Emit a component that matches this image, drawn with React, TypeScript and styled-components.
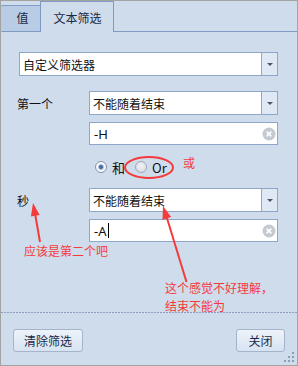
import styled, { createGlobalStyle } from 'styled-components';

const GlobalStyle = createGlobalStyle`
  html, body {
    margin: 0;
    padding: 0;
    background: #ffffff;
  }
  body {
    font-family: "Noto Sans CJK SC", "Noto Sans", sans-serif;
    font-size: 12px;
  }
`;

const BORDER = '#8ea6c8';
const RED = '#f43b3b';

const Window = styled.div`
  position: relative;
  width: 298px;
  height: 366px;
  box-sizing: border-box;
  border: 1px solid #a3a3a3;
  background: #cfdcec;
  display: flex;
  flex-direction: column;
  overflow: hidden;
`;

const TabStrip = styled.div`
  height: 31px;
  box-sizing: border-box;
  border-bottom: 1px solid #7f9bc4;
  display: flex;
  align-items: flex-end;
`;

const Tab = styled.div<{ $active?: boolean }>`
  position: relative;
  box-sizing: border-box;
  height: ${(p) => (p.$active ? '31px' : '27px')};
  margin-bottom: -1px;
  margin-left: ${(p) => (p.$active ? '-1px' : '0')};
  width: ${(p) => (p.$active ? '74px' : '40px')};
  border: 1px solid #7f9bc4;
  border-bottom: ${(p) => (p.$active ? 'none' : '1px solid #7f9bc4')};
  border-left-color: ${(p) => (p.$active ? '#7f9bc4' : 'transparent')};
  background: ${(p) => (p.$active ? '#cfdcec' : '#b9cce5')};
  z-index: ${(p) => (p.$active ? 2 : 1)};
  display: flex;
  justify-content: center;
  padding-top: ${(p) => (p.$active ? '8px' : '4px')};
  padding-left: ${(p) => (p.$active ? '1px' : '3px')};
  color: #1b2a47;
  font-size: 12px;
  line-height: 16px;
`;

const Body = styled.div`
  flex: 1;
  padding: 20px 19px 0 18px;
  display: flex;
  flex-direction: column;
`;

const Combo = styled.div`
  height: 24px;
  box-sizing: border-box;
  border: 1px solid ${BORDER};
  background: #ffffff;
  display: flex;
  align-items: stretch;
`;

const FieldText = styled.div`
  flex: 1;
  display: flex;
  align-items: center;
  padding-left: 3px;
  color: #111111;
  font-size: 12px;
`;

const DropButton = styled.div`
  width: 15px;
  border-left: 1px solid ${BORDER};
  background: #dfe9f6;
  display: flex;
  align-items: center;
  justify-content: center;
`;

const Arrow = styled.div`
  width: 0;
  height: 0;
  border-left: 3.5px solid transparent;
  border-right: 3.5px solid transparent;
  border-top: 3px solid #4a5568;
  margin-top: 1px;
`;

const TextBox = styled.div`
  height: 23px;
  box-sizing: border-box;
  border: 1px solid ${BORDER};
  background: #ffffff;
  display: flex;
  align-items: center;
  padding-right: 1px;
`;

const InputText = styled.div`
  flex: 1;
  display: flex;
  align-items: center;
  padding-left: 4px;
  color: #111111;
  font-family: "Noto Sans", "Noto Sans CJK SC", sans-serif;
  font-size: 13px;
`;

const Caret = styled.span`
  display: inline-block;
  width: 1px;
  height: 15px;
  background: #000000;
  margin-left: 1px;
`;

const Group = styled.div<{ $top: number }>`
  margin-top: ${(p) => p.$top}px;
  display: grid;
  grid-template-columns: 70px 1fr;
  row-gap: 7px;
`;

const Label = styled.div`
  display: flex;
  align-items: center;
  margin-left: -2px;
  color: #111111;
  font-size: 12px;
`;

const RadioRow = styled.div`
  margin-top: 13px;
  height: 18px;
  padding-left: 76px;
  display: flex;
  align-items: center;
  gap: 5px;
  color: #111111;
`;

const Radio = styled.span<{ $checked?: boolean }>`
  width: 12px;
  height: 12px;
  box-sizing: border-box;
  border-radius: 50%;
  border: 1px solid ${(p) => (p.$checked ? '#8692a8' : '#a2a8b3')};
  background: ${(p) =>
    p.$checked
      ? 'radial-gradient(circle, #4d6fa6 0 1.6px, #a9bcd9 2.4px, #f4f6fa 3.4px, #ffffff)'
      : 'radial-gradient(circle at 50% 40%, #f0f2f5, #d3d8df)'};
`;

const RadioLabel = styled.span<{ $gapRight?: number }>`
  font-size: 13px;
  margin-right: ${(p) => p.$gapRight ?? 0}px;
`;

const Footer = styled.div`
  height: 53px;
  box-sizing: border-box;
  background-image: repeating-linear-gradient(to right, #8c9fbf 0 2px, transparent 2px 3px);
  background-size: 100% 1px;
  background-repeat: no-repeat;
  padding: 17px 12px 0 12px;
  display: flex;
  justify-content: space-between;
  align-items: flex-start;
`;

const Button = styled.div<{ $width: number }>`
  width: ${(p) => p.$width}px;
  height: 23px;
  box-sizing: border-box;
  border: 1px solid #a5b4cb;
  border-radius: 3px;
  background: linear-gradient(#eef3fa, #d7e3f2);
  display: flex;
  align-items: center;
  justify-content: center;
  color: #1b2a47;
  font-size: 12px;
`;

const Grip = styled.svg`
  position: absolute;
  right: 1px;
  bottom: 1px;
`;

const Overlay = styled.svg`
  position: absolute;
  left: -1px;
  top: -1px;
  pointer-events: none;
  z-index: 5;
`;

const Note = styled.div<{ $x: number; $y: number }>`
  position: absolute;
  left: ${(p) => p.$x - 1}px;
  top: ${(p) => p.$y - 1}px;
  color: ${RED};
  font-size: 12px;
  line-height: 18px;
  white-space: nowrap;
  z-index: 5;
`;

function ClearIcon(): JSX.Element {
  return (
    <svg width="14" height="14" viewBox="0 0 14 14">
      <circle cx="7" cy="7" r="6.5" fill="#c5c9d1" />
      <path d="M4.6 4.6 L9.4 9.4 M9.4 4.6 L4.6 9.4" stroke="#ffffff" strokeWidth="1.6" />
    </svg>
  );
}

function Select({ value }: { value: string }): JSX.Element {
  return (
    <Combo>
      <FieldText>{value}</FieldText>
      <DropButton>
        <Arrow />
      </DropButton>
    </Combo>
  );
}

const App = (): JSX.Element => {
  return (
    <>
      <GlobalStyle />
      <Window>
        <TabStrip>
          <Tab>值</Tab>
          <Tab $active>文本筛选</Tab>
        </TabStrip>
        <Body>
          <Select value="自定义筛选器" />
          <Group $top={15}>
            <Label>第一个</Label>
            <Select value="不能随着结束" />
            <span />
            <TextBox>
              <InputText>-H</InputText>
              <ClearIcon />
            </TextBox>
          </Group>
          <RadioRow>
            <Radio $checked />
            <RadioLabel $gapRight={5}>和</RadioLabel>
            <Radio />
            <RadioLabel>Or</RadioLabel>
          </RadioRow>
          <Group $top={12}>
            <Label>秒</Label>
            <Select value="不能随着结束" />
            <span />
            <TextBox>
              <InputText>
                -A
                <Caret />
              </InputText>
              <ClearIcon />
            </TextBox>
          </Group>
        </Body>
        <Footer>
          <Button $width={70}>清除筛选</Button>
          <Button $width={49}>关闭</Button>
        </Footer>
        <Grip width="12" height="12" viewBox="0 0 12 12">
          <g fill="#8d9cb6">
            <rect x="8" y="0" width="2" height="2" />
            <rect x="4" y="4" width="2" height="2" />
            <rect x="8" y="4" width="2" height="2" />
            <rect x="0" y="8" width="2" height="2" />
            <rect x="4" y="8" width="2" height="2" />
            <rect x="8" y="8" width="2" height="2" />
          </g>
        </Grip>

        <Overlay width="298" height="366" viewBox="0 0 298 366">
          <ellipse cx="149" cy="167.5" rx="24" ry="10.5" fill="none" stroke={RED} strokeWidth="2" />
          <line x1="40" y1="242" x2="35.3" y2="215" stroke={RED} strokeWidth="2" />
          <polygon points="33,203 39.7,215 30.9,216.6" fill={RED} />
          <line x1="186.5" y1="282" x2="166.8" y2="217.5" stroke={RED} strokeWidth="2" />
          <polygon points="163,206 171.1,217.1 162.5,219.7" fill={RED} />
        </Overlay>
        <Note $x={183} $y={154}>或</Note>
        <Note $x={24} $y={242}>应该是第二个吧</Note>
        <Note $x={165} $y={279}>
          这个感觉不好理解，
          <br />
          结束不能为
        </Note>
      </Window>
    </>
  );
};

export default App;
